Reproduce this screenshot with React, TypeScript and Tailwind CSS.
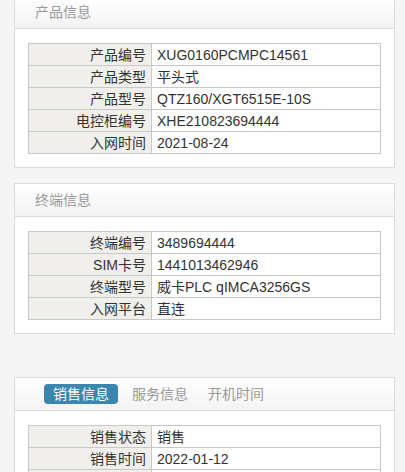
const FONT = { fontFamily: '"Liberation Sans", "Noto Sans CJK SC", sans-serif' };

type Row = [string, string];

const PRODUCT: Row[] = [
  ["产品编号", "XUG0160PCMPC14561"],
  ["产品类型", "平头式"],
  ["产品型号", "QTZ160/XGT6515E-10S"],
  ["电控柜编号", "XHE210823694444"],
  ["入网时间", "2021-08-24"],
];

const TERMINAL: Row[] = [
  ["终端编号", "3489694444"],
  ["SIM卡号", "1441013462946"],
  ["终端型号", "威卡PLC qIMCA3256GS"],
  ["入网平台", "直连"],
];

const SALES: Row[] = [
  ["销售状态", "销售"],
  ["销售时间", "2022-01-12"],
  ["", ""],
];

function InfoTable({ rows }: { rows: Row[] }) {
  return (
    <table className="w-full border-collapse text-[14px] text-[#333]">
      <tbody>
        {rows.map(([label, value], i) => (
          <tr key={i} className="h-[22px]">
            <td className="w-[123px] border border-[#c8c8c8] bg-[#f0efec] px-[5px] text-right leading-[20px] whitespace-nowrap">
              {label}
            </td>
            <td className="border border-[#c8c8c8] bg-white px-[5px] leading-[20px] whitespace-nowrap">
              {value}
            </td>
          </tr>
        ))}
      </tbody>
    </table>
  );
}

function Card({
  header,
  children,
  className = "",
}: {
  header: React.ReactNode;
  children: React.ReactNode;
  className?: string;
}) {
  return (
    <div className={`ml-[14px] w-[381px] border border-[#dcdcdc] bg-white ${className}`}>
      <div className="flex h-[33px] items-center border-b border-[#dcdcdc] bg-gradient-to-b from-white to-[#f3f3f3] px-[20px]">
        {header}
      </div>
      <div className="px-[13px] pb-[13px] pt-[14px]">{children}</div>
    </div>
  );
}

export default function App() {
  return (
    <div className="h-[472px] overflow-hidden bg-[#f5f5f5]" style={FONT}>
      <Card header={<span className="text-[14px] text-[#999]">产品信息</span>} className="-mt-[5px]">
        <InfoTable rows={PRODUCT} />
      </Card>

      <Card header={<span className="text-[14px] text-[#999]">终端信息</span>} className="mt-[15px]">
        <InfoTable rows={TERMINAL} />
      </Card>

      <Card
        className="mt-[43px]"
        header={
          <div className="flex items-center pl-[9px] text-[14px]">
            <span className="rounded-[4px] bg-[#3a86af] px-[9px] leading-[20px] text-white">销售信息</span>
            <span className="ml-[5px] px-[9px] leading-[20px] text-[#999]">服务信息</span>
            <span className="ml-[2px] px-[9px] leading-[20px] text-[#999]">开机时间</span>
          </div>
        }
      >
        <InfoTable rows={SALES} />
      </Card>
    </div>
  );
}
